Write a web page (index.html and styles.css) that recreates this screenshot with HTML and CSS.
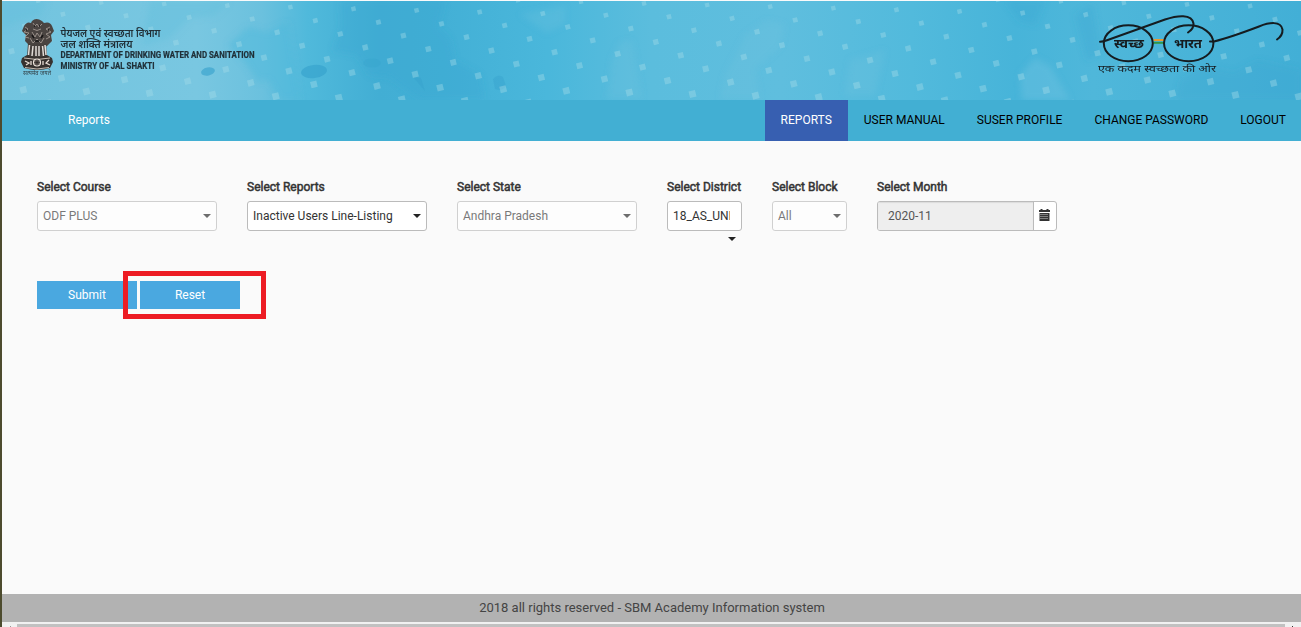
FILE: index.html
```
<!DOCTYPE html>
<html lang="en">
<head>
<meta charset="utf-8">
<title>SBM Academy Information system</title>
<link rel="stylesheet" href="styles.css">
</head>
<body>
<div class="page">
  <header class="banner">
    <svg class="banner-art" viewBox="2 1 1299 99" preserveAspectRatio="none" aria-hidden="true">
      <defs>
        <linearGradient id="wash">
          <stop offset="0" stop-color="#72c4df"/><stop offset=".15" stop-color="#79c7e1"/>
          <stop offset=".2" stop-color="#6bc1de"/><stop offset=".235" stop-color="#50b9db"/>
          <stop offset=".29" stop-color="#42aed4"/><stop offset=".34" stop-color="#43b0d6"/>
          <stop offset=".42" stop-color="#4ab7db"/><stop offset=".5" stop-color="#5bbddd"/>
          <stop offset=".6" stop-color="#5fbede"/><stop offset=".7" stop-color="#52badc"/>
          <stop offset=".78" stop-color="#47b4d9"/><stop offset=".84" stop-color="#4fb7da"/>
          <stop offset="1" stop-color="#42afd6"/>
        </linearGradient>
        <filter id="soft" x="-20%" y="-20%" width="140%" height="140%"><feGaussianBlur stdDeviation="3"/></filter>
      </defs>
      <rect x="2" y="1" width="1299" height="99" fill="url(#wash)"/>
      <g filter="url(#soft)">
        <path d="M2 1h45l-8 15-20 5-17 8zM150 1h80l-15 15-25 2-20 20-28 8z" fill="#60bddd" opacity=".4"/>
        <path d="M228 45l20-18 20 5 20-10 12 78h-20l-12-20-10 2-12-18z" fill="#50b9db" opacity=".5"/>
        <path d="M340 1h105l-7 26 12 12 5 22 25 14 4 24h-65l-30-22-20-2-12-20-24-4 8-25z" fill="#38a6d0" opacity=".3"/>
        <path d="M520 14l45-8v18l-18 9zM612 60l8-18 12-1 10 58h-35z" fill="#73c4e0" opacity=".25"/>
        <path d="M725 75l20-40 22-15 18 5-5 22-25 22 5 30h-40zM850 60l35-10-10 45h-30z" fill="#73c4e0" opacity=".25"/>
        <path d="M1005 1h40l-10 24-15-4zM1075 15l18-12 8 50-14 8z" fill="#38a6d0" opacity=".3"/>
        <path d="M1020 75l15-17 15 8 20 34h-48z" fill="#73c4e0" opacity=".4"/>
        <path d="M1180 80l25-14 30 6 22-12 44 10v30h-125z" fill="#379fcb" opacity=".2"/>
      </g>
      <g fill="#35a0cb" opacity=".6">
        <ellipse cx="208" cy="71.500" rx="7" ry="4" transform="rotate(-12 208 71.500)"/>
        <ellipse cx="314" cy="71.500" rx="13" ry="6.500" transform="rotate(-7 314 71.500)"/>
        <path d="M413 77l12 14-4-13zM493 79q5-6 10-2l3 9q-4 6-11 3z" opacity=".6"/>
        <ellipse cx="372" cy="63" rx="9" ry="4.500" opacity=".4"/>
      </g>
      <g id="flecks" fill="#a6dce9" fill-opacity=".4"></g>
    </svg>
    <div class="dept">
      <svg class="emblem" width="34" height="60" viewBox="0 0 34 60" aria-label="State Emblem of India">
        <path d="M12 3q4-4 10 0l2 2q6-2 8 3l2 5-3 4 1 6-5 5-4 2-4-3-4 3-5-2-5-5 1-6-4-4 2-5q3-5 7-3z" fill="#4a4441"/>
        <path d="M13 5l2 3 2-2 2 3 3-3M5 9l3 2-4 3 5 1-4 4 4 1M30 9l-4 2 5 3-5 2 4 3-4 2M13 11q4 3 8 0M12 14l3 5 2-4 3 4 2-5M10 20l3 5 4-4 4 4 3-5" fill="none" stroke="#a09690" stroke-width=".9"/>
        <path d="M14 8h1M19 8h1M6 12h1M28 12h1M12 17l2 3M21 20l2-3M15 23h4" stroke="#171515" stroke-width="1.500"/>
        <path d="M8 25l4 2 5-2 5 2 4-2 1 14H7z" fill="#46403d"/>
        <path d="M9.500 27l-1 10M13 28l-1 10M16 28v10M19 28v10M22.500 28l1 10M25 27l1 10" stroke="#e2dcd7" stroke-width="1.500"/>
        <path d="M7 37q10 4 20 0l5 3 1 4-3 6q-13 4-26 0l-3-6 1-4z" fill="#37322f"/>
        <path d="M4 40q13 3 26 0M5 49.500q12 3 24 0" fill="none" stroke="#c5bab0"/>
        <path d="M5 43l4 2-3 2M29 42l-3 3 4 2M11 43v4M23 43v4" stroke="#e6dcd4" stroke-width="1.300" fill="none"/>
        <circle cx="17" cy="44.500" r="3.500" fill="#6a625d" stroke="#eee5dd" stroke-width="1.200"/>
        <path d="M17 41.500v6M14 44.500h6M15 42.500l4 4M19 42.500l-4 4" stroke="#282321" stroke-width=".6"/>
        <text x="3" y="57" class="motto" textLength="28" lengthAdjust="spacingAndGlyphs">सत्यमेव जयते</text>
      </svg>
      <svg class="dept-name" width="200" height="52" viewBox="60 24 200 52">
        <text x="60.500" y="37" class="hindi" textLength="100" lengthAdjust="spacingAndGlyphs">पेयजल एवं स्वच्छता विभाग</text>
        <text x="60.500" y="48" class="hindi" textLength="72" lengthAdjust="spacingAndGlyphs">जल शक्ति मंत्रालय</text>
        <text x="60.500" y="58.200" class="latin" textLength="194" lengthAdjust="spacingAndGlyphs">DEPARTMENT OF DRINKING WATER AND SANITATION</text>
        <text x="60.500" y="69" class="latin" textLength="94" lengthAdjust="spacingAndGlyphs">MINISTRY OF JAL SHAKTI</text>
      </svg>
    </div>
    <svg class="swachh" width="196" height="70" viewBox="1093 10 196 70" aria-label="Swachh Bharat">
      <path d="M1153.500 40h10.500" stroke="#e89a35" stroke-width="2"/>
      <path d="M1153.500 42.800h10.500" stroke="#2f9746" stroke-width="2"/>
      <g fill="none" stroke="#151c20" stroke-width="2" stroke-linecap="round">
        <ellipse cx="1128.300" cy="43.300" rx="24.500" ry="18"/>
        <ellipse cx="1188.700" cy="43.300" rx="24.700" ry="18"/>
        <path d="M1100 41.700q3 0 7-1.500L1165 19.500c12-4 27-6 28.500 4q.5 5-5.500 9"/>
        <path d="M1210 41.500h4q16-4 45-15c10-4 22-6 23.500 3q.4 6-5.500 10"/>
      </g>
      <text x="1114" y="47.500" class="lens" textLength="30" lengthAdjust="spacingAndGlyphs">स्वच्छ</text>
      <text x="1174" y="47.500" class="lens" textLength="28" lengthAdjust="spacingAndGlyphs">भारत</text>
      <text x="1098" y="71.500" class="slogan" textLength="118" lengthAdjust="spacingAndGlyphs">एक कदम स्वच्छता की ओर</text>
    </svg>
  </header>

  <nav class="nav">
    <a class="crumb">Reports</a>
    <div class="menu">
      <a class="item active">REPORTS</a>
      <a class="item">USER MANUAL</a>
      <a class="item">SUSER PROFILE</a>
      <a class="item">CHANGE PASSWORD</a>
      <a class="item">LOGOUT</a>
    </div>
  </nav>

  <main class="content">
    <div class="filters">
      <div class="field wide"><label>Select Course</label><div class="select muted"><span>ODF PLUS</span><i class="caret"></i></div></div>
      <div class="field wide"><label>Select Reports</label><div class="select"><span>Inactive Users Line-Listing</span><i class="caret"></i></div></div>
      <div class="field wide"><label>Select State</label><div class="select muted"><span>Andhra Pradesh</span><i class="caret"></i></div></div>
      <div class="field narrow"><label>Select District</label><div class="select dropped"><span>18_AS_UNI</span><i class="caret"></i></div></div>
      <div class="field narrow"><label>Select Block</label><div class="select muted"><span>All</span><i class="caret"></i></div></div>
      <div class="field wide"><label>Select Month</label>
        <div class="month"><span class="value">2020-11</span>
          <span class="addon"><svg width="11" height="12" viewBox="0 0 11 12" aria-hidden="true"><path d="M0 1h1.500V0h2v1h4V0h2v1H11v2H0z" fill="#333"/><path d="M.5 4h10v8H.5z" fill="#333"/><path d="M1.500 5.500h8M1.500 7.500h8M1.500 9.500h8" stroke="#fff" stroke-opacity=".75" stroke-dasharray="1 1"/></svg></span>
        </div>
      </div>
    </div>
    <div class="actions">
      <button class="btn">Submit</button>
      <button class="btn">Reset</button>
      <div class="highlight"></div>
    </div>
  </main>

  <footer class="footer">2018 all rights reserved - SBM Academy Information system</footer>
  <div class="scrollbar"><i class="tick"></i><div class="thumb"></div><i class="tick dark"></i></div>
</div>
<script src="flecks.js"></script>
</body>
</html>
```
FILE: styles.css
```
* { box-sizing: border-box; }
body { margin: 0; font-family: Roboto, "Noto Sans", sans-serif; font-size: 12px; line-height: 17px; color: #333; background: #fafafa; }
.page { height: 627px; border-left: 2px solid #4d4b2e; padding-top: 1px; display: flex; flex-direction: column; overflow: hidden; }
.banner { height: 99px; flex: none; position: relative; display: flex; justify-content: space-between; padding: 9px 12px 0 18px; }
.banner-art { position: absolute; inset: 0; width: 100%; height: 100%; }
.dept { position: relative; display: flex; gap: 6px; padding-top: 8px; }
.dept-name { margin-top: 6px; overflow: visible; }
.dept-name text { fill: #203038; }
.motto { font: 6px "Noto Sans", sans-serif; fill: #33434a; }
.hindi { font: 600 11px "Noto Sans Devanagari", "Noto Sans", sans-serif; }
.latin { font: bold 8.5px Roboto, sans-serif; stroke: #203038; stroke-width: .2px; }
.swachh { position: relative; }
.lens { font: bold 12px "Noto Sans Devanagari", "Noto Sans", sans-serif; fill: #151c20; }
.slogan { font: 9.5px "Noto Sans Devanagari", "Noto Sans", sans-serif; fill: #151c20; }
.nav { height: 41px; flex: none; background: #42afd3; display: flex; justify-content: space-between; line-height: 40px; }
.crumb { color: #fff; padding-left: 66px; }
.menu { display: flex; color: #000; }
.item { padding: 0 16px; white-space: nowrap; }
.item:last-child { padding-right: 15px; }
.item.active { background: #375fb1; color: #fff; }
.content { flex: 1; padding: 38px 35px 0; }
.filters { display: flex; gap: 30px; }
.field label { display: block; font-weight: 400; -webkit-text-stroke: .5px #333; height: 22px; white-space: nowrap; }
.field.wide { width: 180px; }
.field.narrow { width: 75px; }
.select { height: 30px; border: 1px solid #bbb; border-radius: 3px; background: #fff; padding: 0 5px; display: flex; align-items: center; justify-content: space-between; white-space: nowrap; }
.select.muted { opacity: .65; }
.caret { border: 4px solid transparent; border-top-color: #222; border-bottom: 0; flex: none; }
.select.dropped { flex-wrap: wrap; align-items: flex-start; justify-content: flex-end; line-height: 28px; }
.select.dropped span { width: 57px; margin-right: auto; overflow: hidden; }
.select.dropped .caret { margin-top: 7px; }
.month { display: flex; height: 30px; border: 1px solid #bbb; border-radius: 3px; background: #fff; overflow: hidden; }
.value { width: 156px; padding-left: 10px; line-height: 28px; color: #555; background: #eee; border-right: 1px solid #bbb; box-shadow: inset 0 1px 1px rgba(0,0,0,.08); }
.addon { flex: 1; display: flex; align-items: center; justify-content: center; padding: 0 2px 2px 0; }
.actions { position: relative; display: flex; gap: 3px; margin-top: 50px; }
.btn { width: 100px; height: 28px; border: 0; padding: 0; background: #4aa8e0; color: #fff; font: inherit; }
.highlight { position: absolute; left: 86px; top: -10px; width: 143px; height: 48px; border: 5px solid #ed1c24; }
.footer { height: 28px; flex: none; background: #b2b2b2; text-align: center; padding-left: 1px; font-size: 13px; line-height: 27px; color: #444; }
.scrollbar { height: 5px; flex: none; background: #f1f1f1; display: flex; align-items: flex-end; }
.thumb { height: 3px; flex: 1; background: #c1c1c1; margin-left: 6px; margin-right: 7px; }
.tick { width: 1px; height: 1px; background: #999; margin-left: 8px; }
.tick.dark { background: #333; margin: 0 8px 0 0; }
```
FILE: flecks.js
```
// Lattice of small tilted squares that grow slightly towards the bottom of the banner.
const group = document.getElementById("flecks");
for (let a = -50; a <= 50; a++) {
  for (let b = -50; b <= 50; b++) {
    const x = 479.7 + a * 24.95 - b * 13.2;
    const y = 12 + a * 13.4 + b * 25.2;
    if (x < 0 || x > 1305 || y < -3 || y > 104) continue;
    const s = 4.2 + y * 0.026;
    const r = document.createElementNS("http://www.w3.org/2000/svg", "rect");
    r.setAttribute("x", x - s / 2);
    r.setAttribute("y", y - s / 2);
    r.setAttribute("width", s);
    r.setAttribute("height", s);
    r.setAttribute("transform", `rotate(-14 ${x} ${y})`);
    group.appendChild(r);
  }
}
```
